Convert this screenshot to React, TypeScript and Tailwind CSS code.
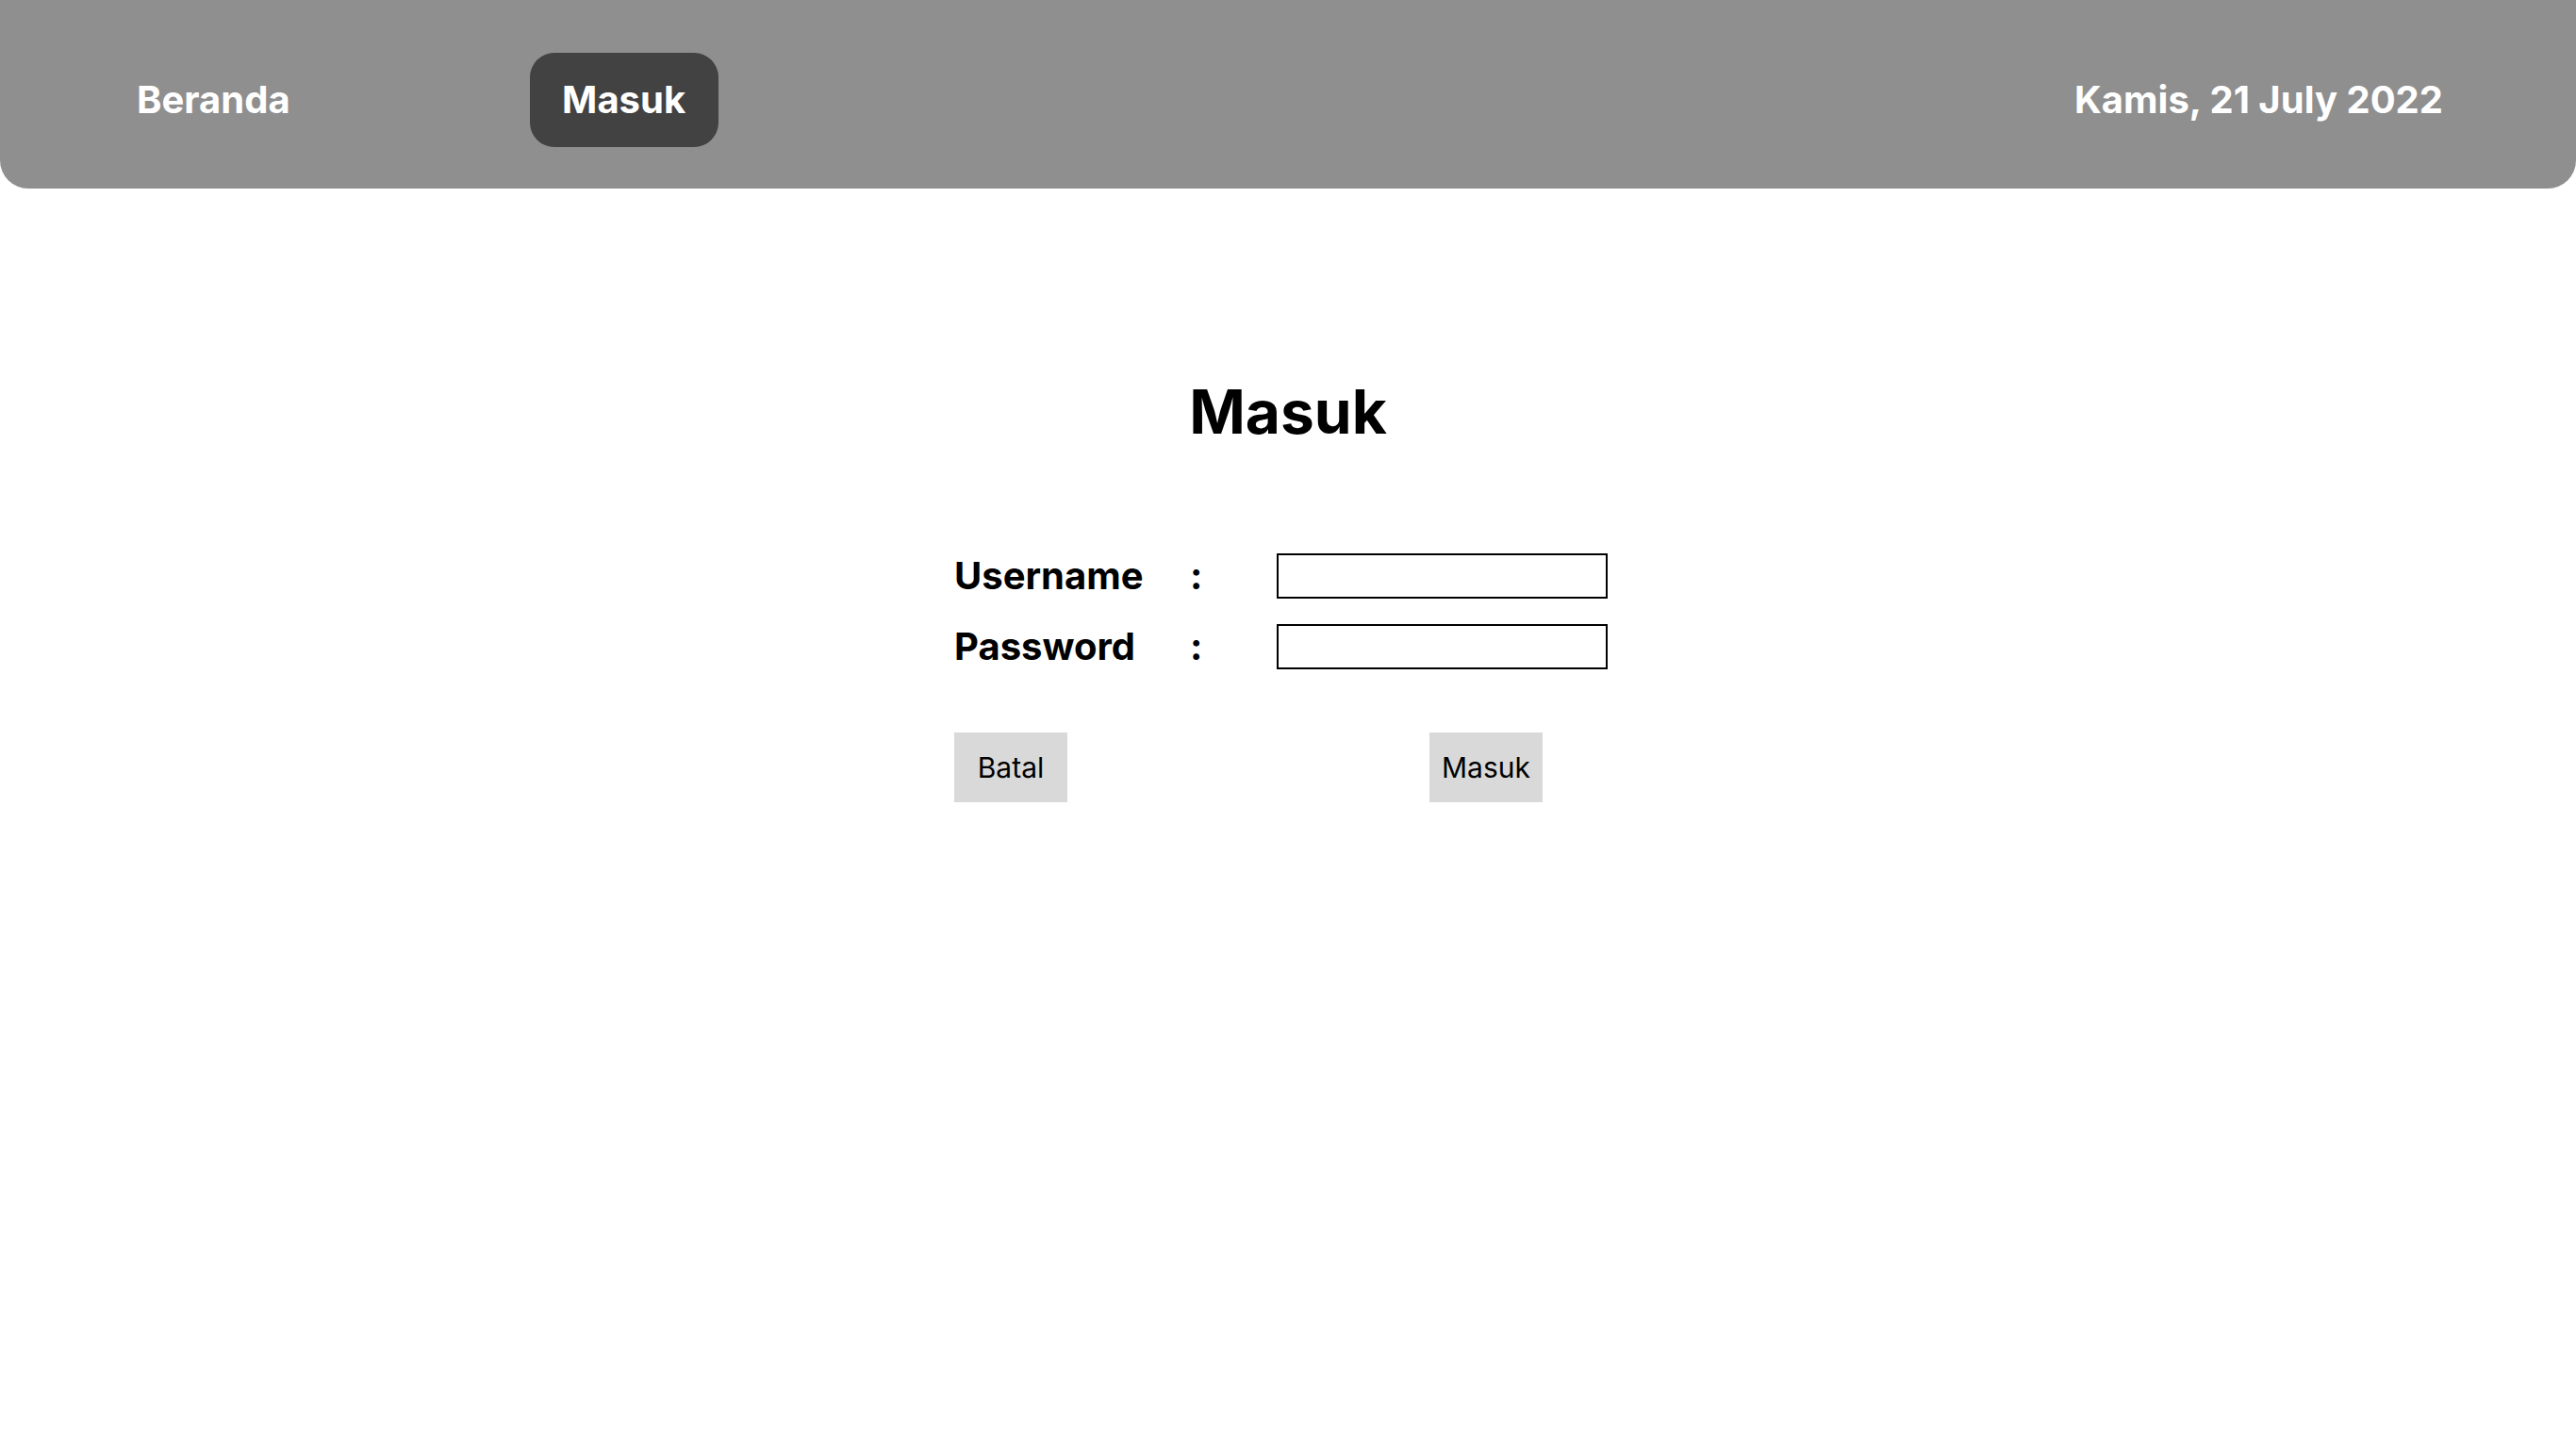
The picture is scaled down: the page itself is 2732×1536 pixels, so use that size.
import React from "react";

export default function App() {
  return (
    <div className="min-h-screen w-full bg-white font-['Inter',sans-serif] text-black">
      <header className="flex h-[200px] items-center rounded-b-[30px] bg-[#8f8f8f] pl-[145px] pr-[141px] pt-[12px] text-white">
        <a href="#" className="text-[40px] font-bold leading-none">
          Beranda
        </a>
        <a
          href="#"
          className="ml-[254px] flex h-[100px] w-[200px] items-center justify-center rounded-[26px] bg-[#424242] text-[40px] font-bold leading-none"
        >
          Masuk
        </a>
        <span className="ml-auto text-[40px] font-bold leading-none">Kamis, 21 July 2022</span>
      </header>

      <main className="flex flex-col items-center">
        <h1 className="mt-[205px] text-[64px] font-bold leading-none">Masuk</h1>

        <form className="mt-[118px] w-[708px] pr-[7px]">
          <div className="flex flex-col gap-[27px]">
            <div className="grid h-[48px] grid-cols-[250px_92px_351px] items-center text-[40px] font-bold leading-[44px]">
              <label htmlFor="username">Username</label>
              <span>:</span>
              <input id="username" type="text" className="h-[48px] border-2 border-black px-2 text-[24px] outline-none" />
            </div>
            <div className="grid h-[48px] grid-cols-[250px_92px_351px] items-center text-[40px] font-bold leading-[44px]">
              <label htmlFor="password">Password</label>
              <span>:</span>
              <input id="password" type="password" className="h-[48px] border-2 border-black px-2 text-[24px] outline-none" />
            </div>
          </div>

          <div className="mt-[67px] flex gap-[384px]">
            <button type="button" className="h-[74px] w-[120px] bg-[#d9d9d9] text-[30px] leading-none">
              Batal
            </button>
            <button type="submit" className="h-[74px] w-[120px] bg-[#d9d9d9] text-[30px] leading-none">
              Masuk
            </button>
          </div>
        </form>
      </main>
    </div>
  );
}
